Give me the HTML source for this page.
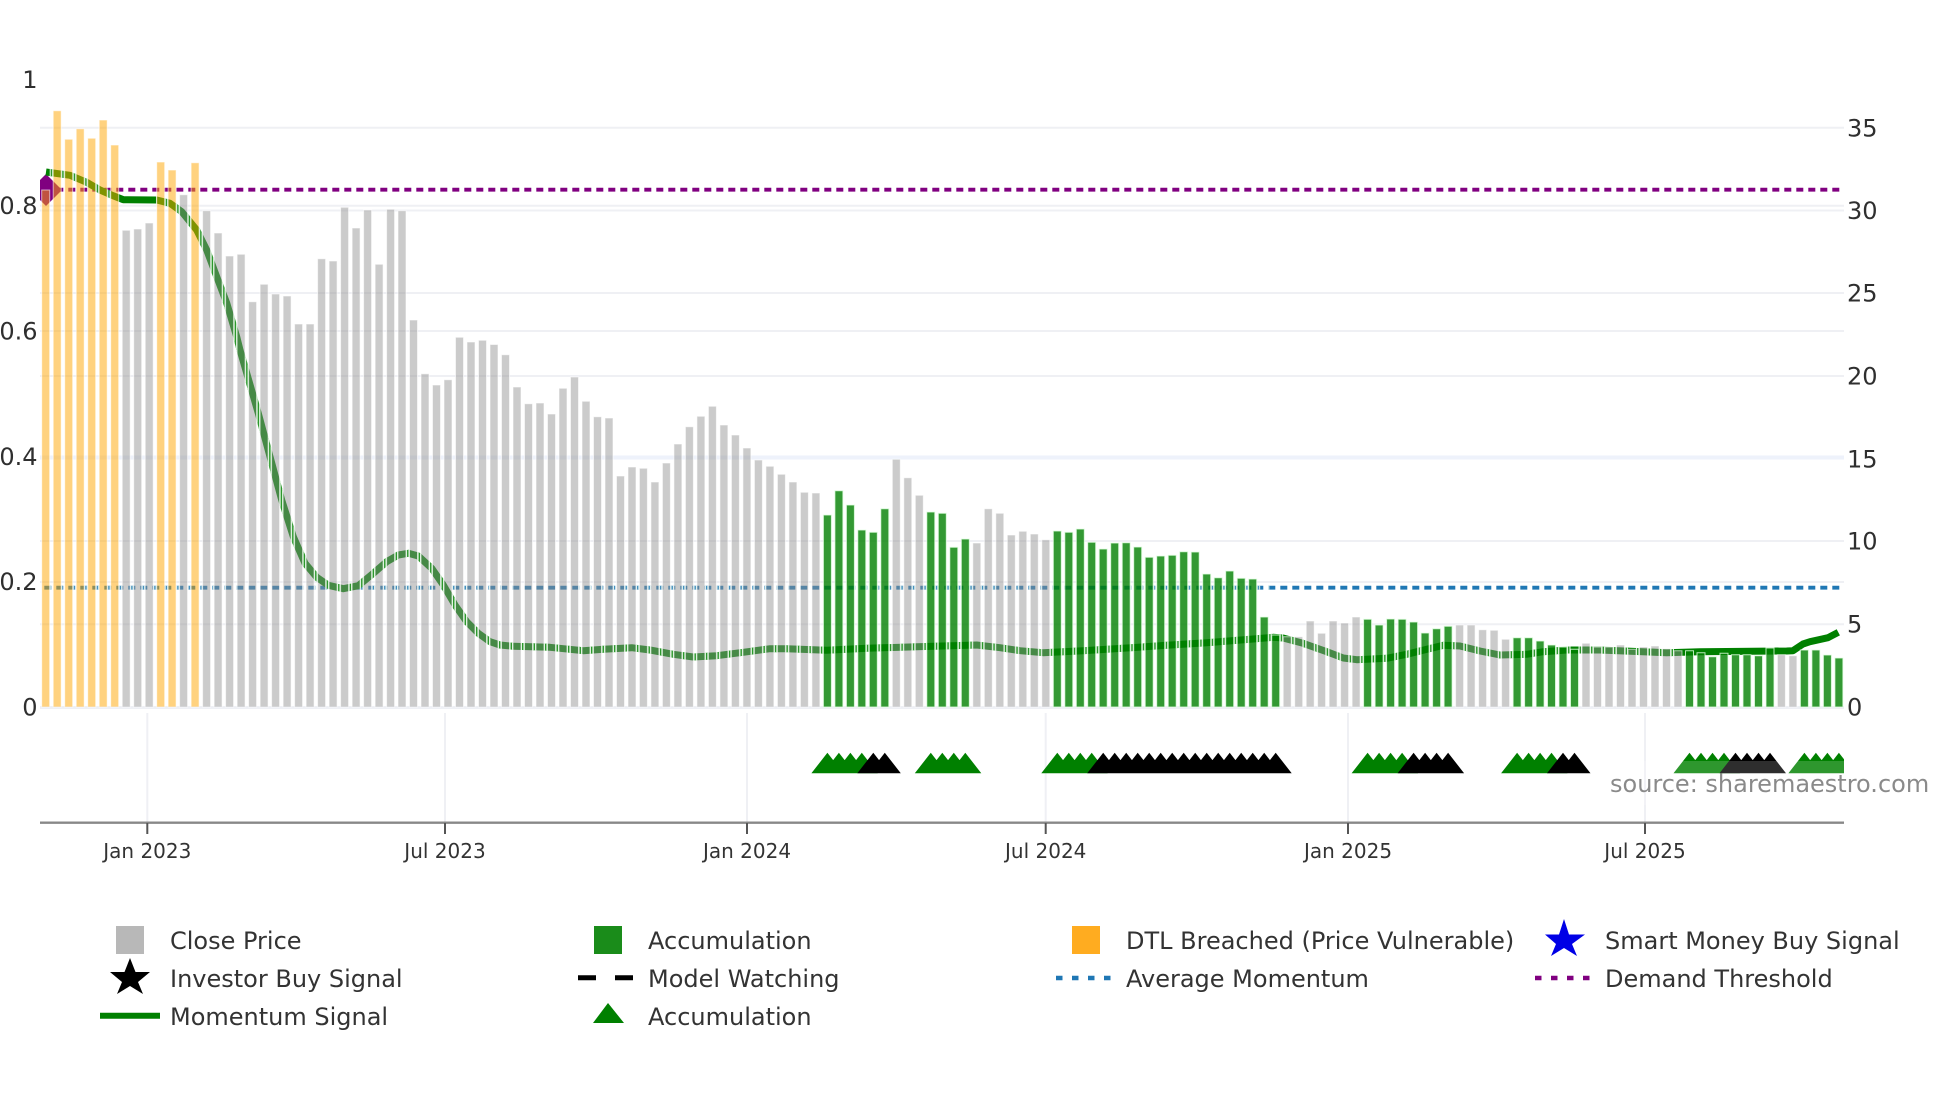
<!DOCTYPE html>
<html lang="en">
<head>
<meta charset="utf-8">
<title>Chart</title>
<style>
html,body{margin:0;padding:0;background:#fff;width:1960px;height:1102px;overflow:hidden}
svg{display:block}
text{font-family:"DejaVu Sans","Liberation Sans",sans-serif;fill:#2f2f2f}
.ax{font-size:24px}
.tk{font-size:20px;text-anchor:middle;fill:#333}
.lg{font-size:24px;fill:#333}
</style>
</head>
<body>
<svg width="1960" height="1102" viewBox="0 0 1960 1102" xmlns="http://www.w3.org/2000/svg">
<defs>
<clipPath id="plot"><rect x="40" y="60" width="1804" height="760"/></clipPath>
<clipPath id="lineclip"><rect x="40" y="60" width="78" height="760"/><rect x="156" y="60" width="1524" height="760"/></clipPath>
<pattern id="stripes" patternUnits="userSpaceOnUse" x="49.7" y="0" width="11.495" height="20">
<rect x="0" y="0" width="1.2" height="20" fill="#f2fff2" fill-opacity=".9"/>
<rect x="2.3" y="0" width="1.2" height="20" fill="#f2fff2" fill-opacity=".9"/>
</pattern>
</defs>
<rect width="1960" height="1102" fill="#fff"/>

<!-- grid -->
<g stroke="#eff0f4" stroke-width="2" fill="none">
<path d="M40 127.7H1844M40 210.5H1844M40 205.7H1844M40 293H1844M40 376H1844M40 331H1844M40 541H1844M40 582H1844M40 624.2H1844"/>
<path d="M147.3 713V822M445 713V822M747 713V822M1045.7 713V822M1348 713V822M1645 713V822"/>
</g>
<path d="M40 457.5H1844" stroke="#eef2fb" stroke-width="4"/>
<path d="M40 707.5H1844" stroke="#eef0f5" stroke-width="3"/>

<!-- marker -->
<polygon points="40,180 46,174 62,190 46,206 40,200" fill="#800080"/>

<!-- threshold lines -->
<path d="M44.3 189.7H1844" stroke="#800080" stroke-width="3.8" stroke-dasharray="7 5" fill="none"/>
<path d="M44.3 587.7H1844" stroke="#1f77b4" stroke-width="3.8" stroke-dasharray="7 5" fill="none"/>
<path d="M44.3 587.7H1270" stroke="url(#stripes)" stroke-width="3.8" stroke-dasharray="7 5" fill="none"/>

<!-- momentum -->
<polyline fill="none" stroke="#008000" stroke-width="7" stroke-linejoin="round" stroke-linecap="butt" points="46,172 70,175.3 86.7,182.3 100,190 113,195.7 123.3,199.7 156.7,200 170,203.3 181.7,211.7 196.7,230 206.7,250 216.7,276.7 226.7,303 236.7,336.7 240,350 258.3,413.3 270,456.7 281.7,500 293.3,536.7 305,563.3 316.7,577.3 328.3,585.3 343.3,588.7 358.3,585.7 373.3,573.3 386.7,561.7 398.3,555 408.3,553.3 418.3,556 431.7,568.3 443.3,585 455,605 466.7,621.7 478.3,633.3 490,641.7 500,645 513.3,646.3 550,647.3 583.3,650.7 603.3,649.3 631.7,647.7 650,650 673.3,654.3 693.3,657 716.7,655.7 743.3,652.3 770,648.7 786.7,648.7 826.7,650.3 866.7,648.3 916.7,646.7 976.7,645 1000,647.7 1020,650.7 1043,652.7 1083,650.7 1126.7,648 1166.7,645.3 1206.7,642.7 1250,639.3 1273,637.3 1283,638 1303,643.3 1326.7,651.7 1343.3,658 1356.7,659.7 1386.7,658.3 1406.7,654.3 1426.7,649.3 1443.3,645.3 1460,646 1480,651 1500,655 1526.7,654.3 1543.3,651.7 1566.7,650 1600,650 1666.7,652.7 1700,651.7 1786.7,651 1793,650.7 1803,644 1810,641.7 1828,637.7 1838.3,632.3"/>
<polyline clip-path="url(#lineclip)" fill="none" stroke="url(#stripes)" stroke-width="7" stroke-linejoin="round" points="46,172 70,175.3 86.7,182.3 100,190 113,195.7 123.3,199.7 156.7,200 170,203.3 181.7,211.7 196.7,230 206.7,250 216.7,276.7 226.7,303 236.7,336.7 240,350 258.3,413.3 270,456.7 281.7,500 293.3,536.7 305,563.3 316.7,577.3 328.3,585.3 343.3,588.7 358.3,585.7 373.3,573.3 386.7,561.7 398.3,555 408.3,553.3 418.3,556 431.7,568.3 443.3,585 455,605 466.7,621.7 478.3,633.3 490,641.7 500,645 513.3,646.3 550,647.3 583.3,650.7 603.3,649.3 631.7,647.7 650,650 673.3,654.3 693.3,657 716.7,655.7 743.3,652.3 770,648.7 786.7,648.7 826.7,650.3 866.7,648.3 916.7,646.7 976.7,645 1000,647.7 1020,650.7 1043,652.7 1083,650.7 1126.7,648 1166.7,645.3 1206.7,642.7 1250,639.3 1273,637.3 1283,638 1303,643.3 1326.7,651.7 1343.3,658 1356.7,659.7 1386.7,658.3 1406.7,654.3 1426.7,649.3 1443.3,645.3 1460,646 1480,651 1500,655 1526.7,654.3 1543.3,651.7 1566.7,650 1600,650 1666.7,652.7 1700,651.7"/>

<!-- orange bars -->
<path fill="#ffa500" fill-opacity=".5" stroke="#fff" stroke-opacity=".6" stroke-width="1" d="M41.7 190V707h8V190zM53.2 110.7V707h8V110.7zM64.7 139.3V707h8V139.3zM76.2 128.7V707h8V128.7zM87.7 138.3V707h8V138.3zM99.2 120V707h8V120zM110.7 145V707h8V145zM156.7 162V707h8V162zM168.1 170V707h8V170zM191.1 162.7V707h8V162.7z"/>

<!-- gray bars -->
<path fill="#929292" fill-opacity=".48" stroke="#fff" stroke-opacity=".6" stroke-width="1" d="M122.2 230.3V707h8V230.3zM133.7 229V707h8V229zM145.2 223V707h8V223zM179.6 194.7V707h8V194.7zM202.6 210.7V707h8V210.7zM214.1 233V707h8V233zM225.6 256V707h8V256zM237.1 254.3V707h8V254.3zM248.6 301.7V707h8V301.7zM260.1 284.3V707h8V284.3zM271.6 294V707h8V294zM283.1 296V707h8V296zM294.6 324V707h8V324zM306.1 324V707h8V324zM317.6 258.7V707h8V258.7zM329.1 261V707h8V261zM340.6 207.3V707h8V207.3zM352.1 228V707h8V228zM363.6 210V707h8V210zM375.1 264.3V707h8V264.3zM386.6 209.3V707h8V209.3zM398 210.7V707h8V210.7zM409.5 320V707h8V320zM421 373.7V707h8V373.7zM432.5 385V707h8V385zM444 379.7V707h8V379.7zM455.5 337.3V707h8V337.3zM467 342V707h8V342zM478.5 340.3V707h8V340.3zM490 344.5V707h8V344.5zM501.5 354.7V707h8V354.7zM513 387V707h8V387zM524.5 403.7V707h8V403.7zM536 403V707h8V403zM547.5 414V707h8V414zM559 388.3V707h8V388.3zM570.5 377V707h8V377zM582 401.3V707h8V401.3zM593.5 416.7V707h8V416.7zM605 418V707h8V418zM616.5 476V707h8V476zM628 467V707h8V467zM639.4 468.3V707h8V468.3zM650.9 482V707h8V482zM662.4 463V707h8V463zM673.9 444V707h8V444zM685.4 426.7V707h8V426.7zM696.9 416.3V707h8V416.3zM708.4 406.3V707h8V406.3zM719.9 425V707h8V425zM731.4 435V707h8V435zM742.9 448V707h8V448zM754.4 460V707h8V460zM765.9 466.3V707h8V466.3zM777.4 474.3V707h8V474.3zM788.9 482V707h8V482zM800.4 492.3V707h8V492.3zM811.9 493V707h8V493zM892.3 459.3V707h8V459.3zM903.8 477.7V707h8V477.7zM915.3 495.3V707h8V495.3zM972.8 543V707h8V543zM984.3 508.7V707h8V508.7zM995.8 513.3V707h8V513.3zM1007.3 535V707h8V535zM1018.8 531.3V707h8V531.3zM1030.3 534V707h8V534zM1041.8 539.7V707h8V539.7zM1283.2 636.7V707h8V636.7zM1294.7 636.7V707h8V636.7zM1306.2 621V707h8V621zM1317.6 633.3V707h8V633.3zM1329.1 621V707h8V621zM1340.6 623V707h8V623zM1352.1 617V707h8V617zM1455.6 625V707h8V625zM1467.1 625V707h8V625zM1478.6 629.7V707h8V629.7zM1490.1 630.3V707h8V630.3zM1501.6 639.3V707h8V639.3zM1582 643.3V707h8V643.3zM1593.5 647V707h8V647zM1605 647V707h8V647zM1616.5 645V707h8V645zM1628 649.3V707h8V649.3zM1639.5 647V707h8V647zM1651 646V707h8V646zM1662.5 648.7V707h8V648.7zM1674 650.7V707h8V650.7zM1777.4 654.7V707h8V654.7zM1788.9 655.7V707h8V655.7z"/>

<!-- green bars -->
<path fill="#008000" fill-opacity=".8" stroke="#e4ffe4" stroke-opacity=".8" stroke-width="1" d="M823.4 515V707h8V515zM834.9 490.7V707h8V490.7zM846.4 505V707h8V505zM857.8 530V707h8V530zM869.3 532.3V707h8V532.3zM880.8 508.7V707h8V508.7zM926.8 512V707h8V512zM938.3 513.3V707h8V513.3zM949.8 547.3V707h8V547.3zM961.3 539V707h8V539zM1053.3 531V707h8V531zM1064.8 532.3V707h8V532.3zM1076.3 529V707h8V529zM1087.7 542.3V707h8V542.3zM1099.2 549V707h8V549zM1110.7 543V707h8V543zM1122.2 542.7V707h8V542.7zM1133.7 547V707h8V547zM1145.2 557.3V707h8V557.3zM1156.7 556V707h8V556zM1168.2 555.3V707h8V555.3zM1179.7 551.7V707h8V551.7zM1191.2 552V707h8V552zM1202.7 574V707h8V574zM1214.2 577.7V707h8V577.7zM1225.7 571V707h8V571zM1237.2 578.3V707h8V578.3zM1248.7 579V707h8V579zM1260.2 617V707h8V617zM1271.7 635V707h8V635zM1363.6 619.3V707h8V619.3zM1375.1 625V707h8V625zM1386.6 619V707h8V619zM1398.1 619.3V707h8V619.3zM1409.6 622V707h8V622zM1421.1 633V707h8V633zM1432.6 628.7V707h8V628.7zM1444.1 626.3V707h8V626.3zM1513.1 637.7V707h8V637.7zM1524.6 637.7V707h8V637.7zM1536.1 641V707h8V641zM1547.5 645V707h8V645zM1559 647V707h8V647zM1570.5 649.3V707h8V649.3zM1685.5 650.7V707h8V650.7zM1697 652.7V707h8V652.7zM1708.5 656.7V707h8V656.7zM1720 653.3V707h8V653.3zM1731.5 654.7V707h8V654.7zM1743 654.7V707h8V654.7zM1754.5 655.7V707h8V655.7zM1766 648V707h8V648zM1800.4 650V707h8V650zM1811.9 650V707h8V650zM1823.4 655V707h8V655zM1834.9 658V707h8V658z"/>

<!-- triangles -->
<g clip-path="url(#plot)">
<path fill="#008000" d="M827.4 752.7l16 20.6h-32zM838.9 752.7l16 20.6h-32zM850.4 752.7l16 20.6h-32zM861.8 752.7l16 20.6h-32zM930.8 752.7l16 20.6h-32zM942.3 752.7l16 20.6h-32zM953.8 752.7l16 20.6h-32zM965.3 752.7l16 20.6h-32zM1057.3 752.7l16 20.6h-32zM1068.8 752.7l16 20.6h-32zM1080.3 752.7l16 20.6h-32zM1091.7 752.7l16 20.6h-32zM1367.6 752.7l16 20.6h-32zM1379.1 752.7l16 20.6h-32zM1390.6 752.7l16 20.6h-32zM1402.1 752.7l16 20.6h-32zM1517.1 752.7l16 20.6h-32zM1528.6 752.7l16 20.6h-32zM1540.1 752.7l16 20.6h-32zM1551.5 752.7l16 20.6h-32zM1689.5 752.7l16 20.6h-32zM1701 752.7l16 20.6h-32zM1712.5 752.7l16 20.6h-32zM1724 752.7l16 20.6h-32zM1804.4 752.7l16 20.6h-32zM1815.9 752.7l16 20.6h-32zM1827.4 752.7l16 20.6h-32zM1838.9 752.7l16 20.6h-32z"/>
<path fill="#000" d="M873.3 752.7l16 20.6h-32zM884.8 752.7l16 20.6h-32zM1103.2 752.7l16 20.6h-32zM1114.7 752.7l16 20.6h-32zM1126.2 752.7l16 20.6h-32zM1137.7 752.7l16 20.6h-32zM1149.2 752.7l16 20.6h-32zM1160.7 752.7l16 20.6h-32zM1172.2 752.7l16 20.6h-32zM1183.7 752.7l16 20.6h-32zM1195.2 752.7l16 20.6h-32zM1206.7 752.7l16 20.6h-32zM1218.2 752.7l16 20.6h-32zM1229.7 752.7l16 20.6h-32zM1241.2 752.7l16 20.6h-32zM1252.7 752.7l16 20.6h-32zM1264.2 752.7l16 20.6h-32zM1275.7 752.7l16 20.6h-32zM1413.6 752.7l16 20.6h-32zM1425.1 752.7l16 20.6h-32zM1436.6 752.7l16 20.6h-32zM1448.1 752.7l16 20.6h-32zM1563 752.7l16 20.6h-32zM1574.5 752.7l16 20.6h-32zM1735.5 752.7l16 20.6h-32zM1747 752.7l16 20.6h-32zM1758.5 752.7l16 20.6h-32zM1770 752.7l16 20.6h-32z"/>
</g>

<!-- source annotation -->
<rect x="1610" y="761" width="320" height="44" fill="#fff" fill-opacity=".18"/>
<text x="1610" y="792" style="font-size:24px;fill:#8a8a8a">source: sharemaestro.com</text>

<!-- x axis -->
<path d="M40 822.7H1844" stroke="#888" stroke-width="2.4"/>
<path d="M147.3 823V834M445 823V834M747 823V834M1045.7 823V834M1348 823V834M1645 823V834" stroke="#555" stroke-width="2"/>
<text class="tk" x="147.3" y="858">Jan 2023</text>
<text class="tk" x="445" y="858">Jul 2023</text>
<text class="tk" x="747" y="858">Jan 2024</text>
<text class="tk" x="1045.7" y="858">Jul 2024</text>
<text class="tk" x="1348" y="858">Jan 2025</text>
<text class="tk" x="1645" y="858">Jul 2025</text>

<!-- left axis -->
<g class="ax" text-anchor="end">
<text x="37.5" y="88">1</text>
<text x="37.5" y="214">0.8</text>
<text x="37.5" y="339.5">0.6</text>
<text x="37.5" y="465">0.4</text>
<text x="37.5" y="590">0.2</text>
<text x="37.5" y="715.5">0</text>
</g>
<!-- right axis -->
<g class="ax">
<text x="1847" y="136.5">35</text>
<text x="1847" y="219">30</text>
<text x="1847" y="301.5">25</text>
<text x="1847" y="384.5">20</text>
<text x="1847" y="467.5">15</text>
<text x="1847" y="549.5">10</text>
<text x="1847" y="632.5">5</text>
<text x="1847" y="715.5">0</text>
</g>

<!-- legend -->
<rect x="116" y="926" width="28" height="28" fill="#b8b8b8"/>
<rect x="594" y="926" width="28" height="28" fill="#1a8c1a"/>
<rect x="1072" y="926" width="28" height="28" fill="#ffac20"/>
<polygon fill="#0000e6" points="1564,919 1569,934.5 1585,934.5 1572,944 1577,956 1564,948 1551,956 1556,944 1545,934.5 1559,934.5"/>
<polygon fill="#000" points="130,958 135.5,972 150,972 138,982 143,994 130,986 117,994 122,982 110,972 124.5,972"/>
<path d="M100 1015.7H160" stroke="#008000" stroke-width="6"/>
<path d="M578 977.7H596M615 977.7H633" stroke="#000" stroke-width="5"/>
<polygon fill="#008000" points="608,1003 624,1023 593,1023"/>
<path d="M1056 978H1112" stroke="#1f77b4" stroke-width="4.5" stroke-dasharray="6.5 9.5"/>
<path d="M1535 978H1591" stroke="#800080" stroke-width="4.5" stroke-dasharray="6.5 9.5"/>

<text class="lg" x="170" y="949">Close Price</text>
<text class="lg" x="648" y="949">Accumulation</text>
<text class="lg" x="1126" y="949">DTL Breached (Price Vulnerable)</text>
<text class="lg" x="1605" y="949">Smart Money Buy Signal</text>
<text class="lg" x="170" y="987">Investor Buy Signal</text>
<text class="lg" x="648" y="987">Model Watching</text>
<text class="lg" x="1126" y="987">Average Momentum</text>
<text class="lg" x="1605" y="987">Demand Threshold</text>
<text class="lg" x="170" y="1025">Momentum Signal</text>
<text class="lg" x="648" y="1025">Accumulation</text>
</svg>
</body>
</html>
